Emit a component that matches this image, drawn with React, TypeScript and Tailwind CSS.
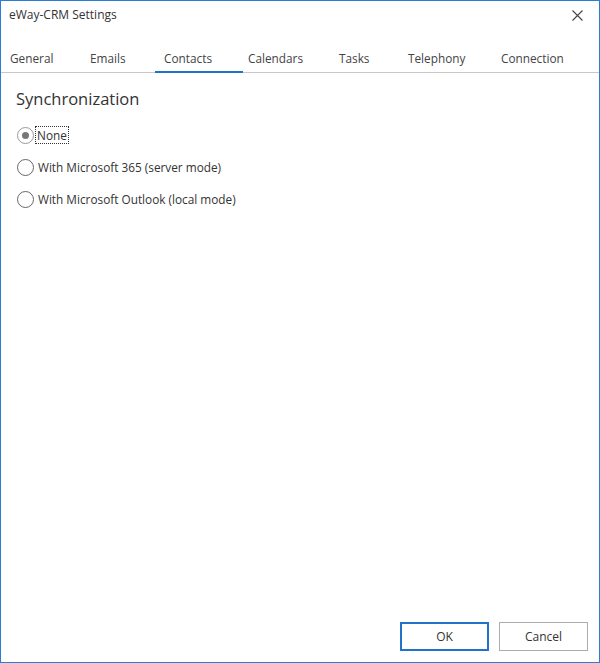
import React from "react";

const font = { fontFamily: '"Open Sans", "Noto Sans", Arial, sans-serif' };

const tabs = [
  { label: "General", w: "w-[80px]" },
  { label: "Emails", w: "w-[74px]" },
  { label: "Contacts", w: "w-[84px]", active: true },
  { label: "Calendars", w: "w-[91px]" },
  { label: "Tasks", w: "w-[69px]" },
  { label: "Telephony", w: "w-[93px]" },
  { label: "Connection", w: "w-[90px]" },
];

function Radio({ label, checked, focused }: { label: string; checked?: boolean; focused?: boolean }) {
  return (
    <div className="flex items-center h-[32px]">
      <div
        className={
          "w-[17px] h-[17px] rounded-full border bg-white flex items-center justify-center " +
          (checked ? "border-[#999999]" : "border-[#666666]")
        }
      >
        {checked && <div className="w-[7px] h-[7px] rounded-full bg-[#777777]" />}
      </div>
      <span
        className={
          "ml-[2px] px-[1px] text-[11.8px] text-[#333333] leading-[16px] " +
          (focused ? "outline outline-1 outline-dotted outline-[#333333]" : "border border-transparent")
        }
      >
        {label}
      </span>
    </div>
  );
}

export default function App() {
  return (
    <div style={font} className="w-[600px] h-[663px] border border-[#2b7cd3] bg-white flex flex-col">
      <div className="h-[28px] flex items-center justify-between pl-[8px] pr-[12px]">
        <span className="text-[12px] text-[#333333]">eWay-CRM Settings</span>
        <svg width="11" height="11" viewBox="0 0 11 11" className="mr-[4px]">
          <path d="M0.5 0.5 L10.5 10.5 M10.5 0.5 L0.5 10.5" stroke="#444" strokeWidth="1.1" />
        </svg>
      </div>
      <div className="h-[44px] flex items-end border-b border-[#c8c8c8]">
        {tabs.map((t) => (
          <div key={t.label} className={"relative h-[26px] flex items-center pl-[9px] " + t.w}>
            <span className="text-[11.8px] text-[#444444]">{t.label}</span>
            {t.active && <div className="absolute left-0 bottom-[-1px] w-[88px] h-[2px] bg-[#1f74c8]" />}
          </div>
        ))}
      </div>
      <div className="flex-1 flex flex-col pl-[15px] pt-[14px]">
        <div className="text-[16.5px] text-[#333333] leading-[24px]">Synchronization</div>
        <div className="mt-[8px] pl-[1px] flex flex-col">
          <Radio label="None" checked focused />
          <Radio label="With Microsoft 365 (server mode)" />
          <Radio label="With Microsoft Outlook (local mode)" />
        </div>
      </div>
      <div className="flex justify-end gap-[10px] pr-[11px] pb-[11px]">
        <button className="w-[89px] h-[29px] border-2 border-[#1f74c8] bg-white text-[12px] text-[#333333]">OK</button>
        <button className="w-[89px] h-[29px] border border-[#adadad] bg-white text-[12px] text-[#333333]">Cancel</button>
      </div>
    </div>
  );
}
